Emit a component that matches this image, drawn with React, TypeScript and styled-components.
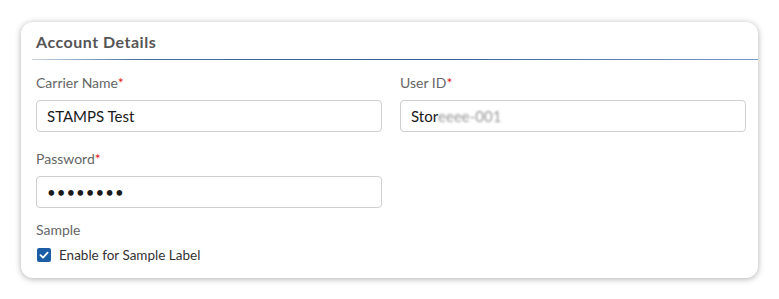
import styled, { createGlobalStyle } from 'styled-components';

const GlobalStyle = createGlobalStyle`
  body {
    margin: 0;
    background: #ffffff;
    font-family: Lato, 'Open Sans', Arial, sans-serif;
  }
`;

const Page = styled.main`
  padding: 22px 21px;
`;

const Card = styled.section`
  background: #fff;
  border-radius: 12px;
  box-shadow: 0 1px 6px rgba(0, 0, 0, 0.32);
  padding: 10px 0 14px;
`;

const Title = styled.h2`
  margin: 0;
  padding-left: 15px;
  font-size: 16px;
  line-height: 20px;
  font-weight: 700;
  letter-spacing: 0.5px;
  color: #555;
`;

const Divider = styled.hr`
  margin: 7px 0 14px 11px;
  border: 0;
  height: 1px;
  background: linear-gradient(90deg, #c9d3df 0%, #3f6f9f 15%, #2f5f95 55%, #6f9ccb 100%);
`;

const Body = styled.div`
  padding: 0 12px 0 15px;
`;

const Grid = styled.div`
  display: grid;
  grid-template-columns: 346px 346px;
  column-gap: 18px;
  row-gap: 18px;
`;

const Field = styled.div`
  display: flex;
  flex-direction: column;
  gap: 8px;
`;

const Label = styled.label`
  font-size: 14px;
  line-height: 18px;
  color: #666;
`;

const Req = styled.span`
  color: #e02020;
`;

const Input = styled.div<{ $dots?: boolean }>`
  box-sizing: border-box;
  height: 32px;
  border: 1px solid #cfcfcf;
  border-radius: 4px;
  padding: 0 10px;
  display: flex;
  align-items: center;
  font-size: 15px;
  letter-spacing: ${({ $dots }) => ($dots ? '1px' : '0')};
  color: #1a1a1a;
`;

const Blur = styled.span`
  color: #9a9a9a;
  filter: blur(1.2px);
`;

const Sample = styled.div`
  margin-top: 13px;
  display: flex;
  flex-direction: column;
  gap: 7px;
`;

const CheckRow = styled.div`
  display: flex;
  align-items: center;
  gap: 8px;
  padding-left: 1px;
  font-size: 13.5px;
  line-height: 18px;
  color: #333;
`;

const Box = styled.span`
  width: 14px;
  height: 14px;
  border-radius: 2px;
  background: #1c5ea6;
  display: flex;
  align-items: center;
  justify-content: center;
`;

export default function App() {
  return (
    <>
      <GlobalStyle />
      <Page>
        <Card>
          <Title>Account Details</Title>
          <Divider />
          <Body>
            <Grid>
              <Field>
                <Label>Carrier Name<Req>*</Req></Label>
                <Input>STAMPS Test</Input>
              </Field>
              <Field>
                <Label>User ID<Req>*</Req></Label>
                <Input>Stor<Blur>eeee-001</Blur></Input>
              </Field>
              <Field>
                <Label>Password<Req>*</Req></Label>
                <Input $dots>••••••••</Input>
              </Field>
            </Grid>
            <Sample>
              <Label>Sample</Label>
              <CheckRow>
                <Box>
                  <svg width="10" height="10" viewBox="0 0 10 10">
                    <path d="M1.5 5.2 L4 7.6 L8.6 2.6" fill="none" stroke="#fff" strokeWidth="1.8" strokeLinecap="round" strokeLinejoin="round" />
                  </svg>
                </Box>
                Enable for Sample Label
              </CheckRow>
            </Sample>
          </Body>
        </Card>
      </Page>
    </>
  );
}
